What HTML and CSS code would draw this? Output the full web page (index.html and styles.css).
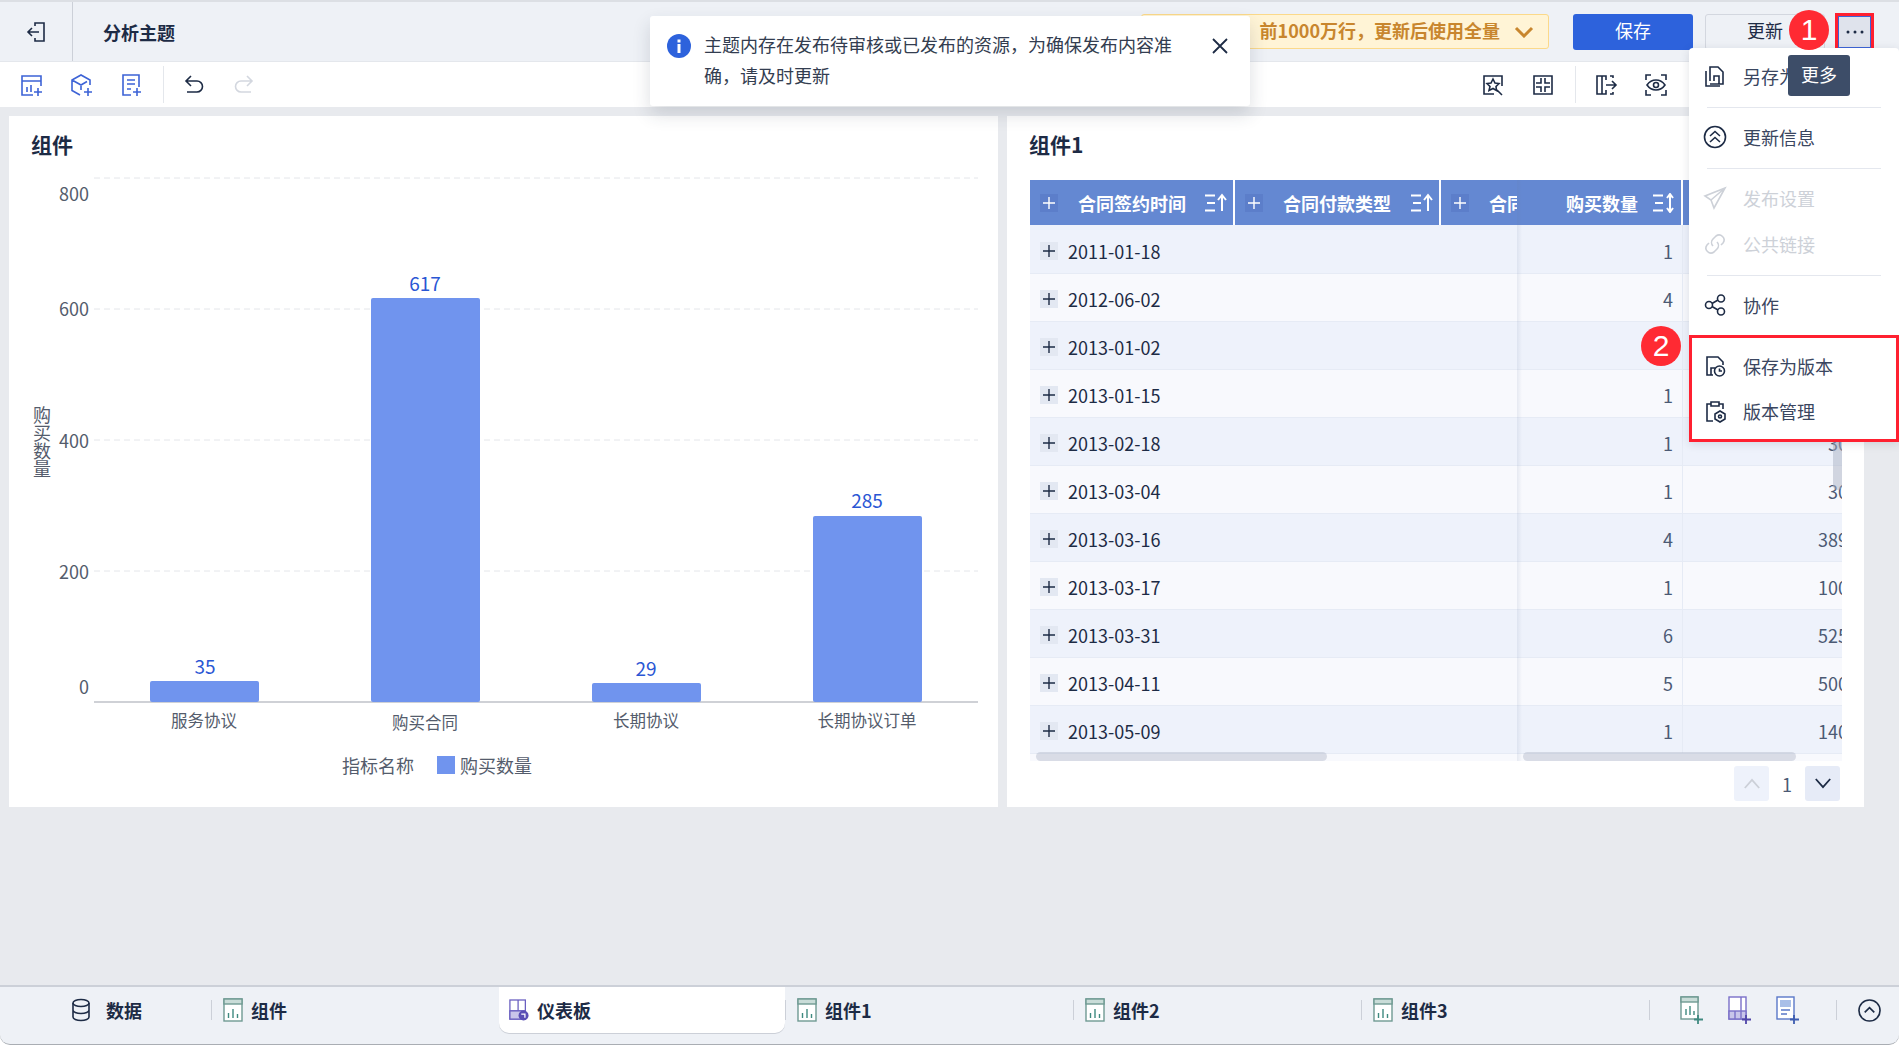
FILE: index.html

```html
<!DOCTYPE html>
<html lang="zh-CN">
<head>
    <meta charset="UTF-8">
    <title>分析主题</title>
    <link rel="stylesheet" href="styles.css">
</head>
<body>
<svg class="sprite" width="0" height="0">
    <symbol id="i-plus" viewBox="0 0 18 18"><path d="M9 3v12M3 9h12"/></symbol>
    <symbol id="i-sort-up" viewBox="0 0 22 20"><path d="M0 2.500h10M2 10h8M0 17.500h10M17 18V3M13 7l4-5 4 5"/></symbol>
    <symbol id="i-sort-both" viewBox="0 0 22 20"><path d="M0 2.500h10M2 10h8M0 17.500h10M17 1v18M14 5l3-4 3 4M14 15l3 4 3-4"/></symbol>
    <symbol id="i-tab-chart" viewBox="0 0 20 24"><rect x="1" y="1" width="18" height="22" fill="#fff" stroke="#6f9a93"/><rect x="1" y="1" width="18" height="5" fill="#c9dcd8" stroke="#6f9a93"/><path d="M5.500 20v-5M10 20v-9M14.500 20v-4" stroke="#3f8a80"/></symbol>
</svg>

<div class="app">
    <!-- top bar -->
    <header class="topbar">
        <div class="back">
            <svg class="ico" viewBox="0 0 24 24"><path d="M11 6V3h9v18h-9v-3M15 12H4M8 8l-4 4 4 4"/></svg>
        </div>
        <div class="title">分析主题</div>
        <div class="top-actions">
            <span class="top-divider"></span>
            <div class="banner">
                <span>前1000万行，更新后使用全量</span>
                <svg class="banner-arrow" viewBox="0 0 20 12"><path d="M2 2l8 8 8-8"/></svg>
            </div>
            <button class="btn btn-save">保存</button>
            <button class="btn btn-update">更新</button>
            <button class="btn-more"><svg class="more-dots" viewBox="0 0 18 4"><circle cx="2" cy="2" r="1.500"/><circle cx="9" cy="2" r="1.500"/><circle cx="16" cy="2" r="1.500"/></svg></button>
        </div>
    </header>

    <!-- toolbar -->
    <div class="toolbar">
        <svg class="ico ico-blue" viewBox="0 0 24 24"><path d="M22 13V3H3v19h11M3 8h19M8 19v-5M12 19v-7M19 15v8M15 19h8"/></svg>
        <svg class="ico ico-blue" viewBox="0 0 24 24"><path d="M11 22l-8-4.500V7l9-5 9 5v5M3 7l9 5 6-3.500M12 12v5M19 15v8M15 19h8"/></svg>
        <svg class="ico ico-blue" viewBox="0 0 24 24"><path d="M12 22H4V2h16v12M8 7h8M8 11h8M8 16h4M18 15v8M14 19h8"/></svg>
        <span class="tool-divider"></span>
        <svg class="ico ico-undo" viewBox="0 0 24 24"><path d="M9 3L4 8l5 5M4 8h11a5.500 5.500 0 0 1 0 11H5"/></svg>
        <svg class="ico ico-off" viewBox="0 0 24 24"><path d="M15 3l5 5-5 5M20 8H9a5.500 5.500 0 0 0 0 11h10"/></svg>
        <div class="tools-right">
            <svg class="ico" viewBox="0 0 24 24"><path d="M21 13V3H3v18h10M12 6l2 4 4 .5-3 3 .5 4-3.500-2-4 2 1-4-3-3 4-.5zM16 17l5 5"/></svg>
            <svg class="ico" viewBox="0 0 24 24"><path d="M3 3h18v18H3zM10 5v5H5M14 5v5h5M10 19v-5H5M14 19v-5h5"/></svg>
            <span class="tool-divider"></span>
            <svg class="ico" viewBox="0 0 24 24"><path d="M12 7V3H3v18h9v-4M8 3v18M12 12h10M18 8l4 4-4 4M16 3h3v2M16 21h3v-2"/></svg>
            <svg class="ico" viewBox="0 0 24 24"><path d="M2 7V2h5M17 2h5v5M22 17v5h-5M7 22H2v-5M3 12s3.500-5 9-5 9 5 9 5-3.500 5-9 5-9-5-9-5z"/><circle cx="12" cy="12" r="2.500"/></svg>
        </div>
    </div>

    <!-- canvas -->
    <main class="canvas">
        <section class="card">
            <h2 class="card-title">组件</h2>
            <svg class="chart" width="989" height="570" viewBox="0 0 989 570">
                <g class="grid">
                    <line x1="85" y1="4" x2="969" y2="4"/>
                    <line x1="85" y1="135" x2="969" y2="135"/>
                    <line x1="85" y1="266" x2="969" y2="266"/>
                    <line x1="85" y1="397" x2="969" y2="397"/>
                </g>
                <line class="axis" x1="85" y1="528" x2="969" y2="528"/>
                <g class="bars">
                    <rect x="141" y="507" width="109" height="21" rx="2"/>
                    <rect x="362" y="124" width="109" height="404" rx="2"/>
                    <rect x="583" y="509" width="109" height="19" rx="2"/>
                    <rect x="804" y="342" width="109" height="186" rx="2"/>
                </g>
                <g class="y-labels">
                    <text x="80" y="19">800</text>
                    <text x="80" y="134">600</text>
                    <text x="80" y="266">400</text>
                    <text x="80" y="397">200</text>
                    <text x="80" y="512">0</text>
                </g>
                <text class="y-title" x="33" y="268">购买数量</text>
                <g class="values">
                    <text x="196" y="491">35</text>
                    <text x="416" y="108">617</text>
                    <text x="637" y="493">29</text>
                    <text x="858" y="325">285</text>
                </g>
                <g class="x-labels">
                    <text x="195" y="546">服务协议</text>
                    <text x="416" y="548">购买合同</text>
                    <text x="637" y="546">长期协议</text>
                    <text x="858" y="546">长期协议订单</text>
                </g>
            </svg>
            <div class="legend">
                <span>指标名称</span>
                <i class="legend-mark"></i>
                <span>购买数量</span>
            </div>
        </section>

        <section class="card">
            <h2 class="card-title card-title-table">组件1</h2>
            <div class="table-wrap">
                <table class="data-table">
                    <colgroup><col class="c1"><col class="c2"><col class="c3"><col class="c4"><col class="c5"></colgroup>
                    <thead>
                        <tr>
                            <th><div class="th-in"><svg class="plus"><use href="#i-plus"/></svg><span class="th-text">合同签约时间</span><svg class="sort"><use href="#i-sort-up"/></svg></div></th>
                            <th><div class="th-in"><svg class="plus"><use href="#i-plus"/></svg><span class="th-text">合同付款类型</span><svg class="sort"><use href="#i-sort-up"/></svg></div></th>
                            <th class="th-frozen-end"><div class="th-in"><svg class="plus"><use href="#i-plus"/></svg><span class="th-text">合同类型</span></div></th>
                            <th><div class="th-in th-right"><span class="th-text">购买数量</span><svg class="sort"><use href="#i-sort-both"/></svg></div></th>
                            <th></th>
                        </tr>
                    </thead>
                    <tbody>
                        <tr><td colspan="3"><div class="td-in"><svg class="plus"><use href="#i-plus"/></svg>2011-01-18</div></td><td class="num">1</td><td class="num">1000</td></tr>
                        <tr><td colspan="3"><div class="td-in"><svg class="plus"><use href="#i-plus"/></svg>2012-06-02</div></td><td class="num">4</td><td class="num">4000</td></tr>
                        <tr><td colspan="3"><div class="td-in"><svg class="plus"><use href="#i-plus"/></svg>2013-01-02</div></td><td class="num">2</td><td class="num">2000</td></tr>
                        <tr><td colspan="3"><div class="td-in"><svg class="plus"><use href="#i-plus"/></svg>2013-01-15</div></td><td class="num">1</td><td class="num">1000</td></tr>
                        <tr><td colspan="3"><div class="td-in"><svg class="plus"><use href="#i-plus"/></svg>2013-02-18</div></td><td class="num">1</td><td class="num">300</td></tr>
                        <tr><td colspan="3"><div class="td-in"><svg class="plus"><use href="#i-plus"/></svg>2013-03-04</div></td><td class="num">1</td><td class="num">300</td></tr>
                        <tr><td colspan="3"><div class="td-in"><svg class="plus"><use href="#i-plus"/></svg>2013-03-16</div></td><td class="num">4</td><td class="num">3899</td></tr>
                        <tr><td colspan="3"><div class="td-in"><svg class="plus"><use href="#i-plus"/></svg>2013-03-17</div></td><td class="num">1</td><td class="num">1000</td></tr>
                        <tr><td colspan="3"><div class="td-in"><svg class="plus"><use href="#i-plus"/></svg>2013-03-31</div></td><td class="num">6</td><td class="num">5250</td></tr>
                        <tr><td colspan="3"><div class="td-in"><svg class="plus"><use href="#i-plus"/></svg>2013-04-11</div></td><td class="num">5</td><td class="num">5000</td></tr>
                        <tr><td colspan="3"><div class="td-in"><svg class="plus"><use href="#i-plus"/></svg>2013-05-09</div></td><td class="num">1</td><td class="num">1400</td></tr>
                        <tr><td colspan="3"></td><td></td><td></td></tr>
                    </tbody>
                </table>
                <span class="freeze-line"></span>
                <span class="scroll scroll-a"></span>
                <span class="scroll scroll-b"></span>
                <span class="scroll-v"></span>
            </div>
            <div class="pager">
                <button class="page-btn page-up"><svg viewBox="0 0 20 12"><path d="M2 11l8-9 8 9"/></svg></button>
                <span class="page-num">1</span>
                <button class="page-btn page-down"><svg viewBox="0 0 20 12"><path d="M2 1l8 9 8-9"/></svg></button>
            </div>
        </section>
    </main>

    <!-- bottom tabs -->
    <footer class="tabbar">
        <div class="tab-data">
            <svg class="ico" viewBox="0 0 24 24"><ellipse cx="12" cy="5" rx="8" ry="3.500"/><path d="M4 5v14c0 2 3.500 3.500 8 3.500s8-1.500 8-3.500V5M4 12c0 2 3.500 3.500 8 3.500s8-1.500 8-3.500"/></svg>
            <span>数据</span>
        </div>
        <div class="tab"><svg class="tab-ico"><use href="#i-tab-chart"/></svg><span>组件</span></div>
        <div class="tab tab-active">
            <svg class="tab-ico" viewBox="0 0 22 24"><rect x="1" y="1" width="17" height="21" fill="#fff" stroke="#6a5fc0"/><path d="M1 13h17M10 1v21" stroke="#6a5fc0"/><rect x="1" y="13" width="17" height="9" fill="#c9c5ea" stroke="#6a5fc0"/><circle cx="16" cy="18" r="5.500" fill="#5a4fb5" stroke="none"/><path d="M13.500 16.500h4v4" stroke="#fff"/></svg>
            <span>仪表板</span>
        </div>
        <div class="tab"><svg class="tab-ico"><use href="#i-tab-chart"/></svg><span>组件1</span></div>
        <div class="tab"><svg class="tab-ico"><use href="#i-tab-chart"/></svg><span>组件2</span></div>
        <div class="tab"><svg class="tab-ico"><use href="#i-tab-chart"/></svg><span>组件3</span></div>
        <div class="tab-tools">
            <svg class="add-ico" viewBox="0 0 24 28"><rect x="2" y="1" width="17" height="22" fill="#fff" stroke="#6f9a93"/><rect x="2" y="1" width="17" height="5" fill="#c9dcd8" stroke="#6f9a93"/><path d="M7 19v-6M11 19v-9M15 19v-4" stroke="#3f8a80"/><path d="M19 19v9M15 23.500h9" stroke="#3f8a80" stroke-width="1.800"/></svg>
            <svg class="add-ico" viewBox="0 0 24 28"><rect x="2" y="1" width="17" height="22" fill="#fff" stroke="#7a6fc8"/><rect x="2" y="15" width="17" height="8" fill="#c9c5ea" stroke="#7a6fc8"/><path d="M14 1v22M8 15v8" stroke="#7a6fc8"/><path d="M19 19v9M15 23.500h9" stroke="#4f45a8" stroke-width="1.800"/></svg>
            <svg class="add-ico" viewBox="0 0 24 28"><rect x="2" y="1" width="17" height="22" fill="#fff" stroke="#5a78c8"/><rect x="5" y="4" width="11" height="7" fill="#a9bfe8" stroke="none"/><path d="M6 14h9M6 18h6" stroke="#5a78c8"/><path d="M19 19v9M15 23.500h9" stroke="#3c5cb0" stroke-width="1.800"/></svg>
            <span class="tab-tools-divider"></span>
            <svg class="collapse-ico" viewBox="0 0 24 24"><circle cx="12" cy="12" r="11"/><path d="M7 14l5-5 5 5"/></svg>
        </div>
    </footer>
</div>

<!-- overlays -->
<div class="notice">
    <svg class="notice-ico" viewBox="0 0 24 24"><circle cx="12" cy="12" r="12" fill="#2d62dc"/><rect x="10.500" y="10" width="3" height="9" fill="#fff"/><rect x="10.500" y="5.500" width="3" height="3" fill="#fff"/></svg>
    <p class="notice-text">主题内存在发布待审核或已发布的资源，为确保发布内容准确，请及时更新</p>
    <svg class="notice-close" viewBox="0 0 18 18"><path d="M2 2l14 14M16 2L2 16"/></svg>
</div>

<div class="menu">
    <div class="menu-item"><svg class="ico" viewBox="0 0 24 24"><path d="M7 17V3h8l5 5v12H7M11 17v-5h5v8M3 7v15h14"/></svg>另存为</div>
    <hr>
    <div class="menu-item"><svg class="ico" viewBox="0 0 24 24"><circle cx="12" cy="12" r="10.500"/><path d="M7 11l5-4.500 5 4.500M7 17l5-4.500 5 4.500"/></svg>更新信息</div>
    <hr>
    <div class="menu-item item-off"><svg class="ico" viewBox="0 0 24 24"><path d="M22 2L2 10l6 4 3 8zM22 2L8 14"/></svg>发布设置</div>
    <div class="menu-item item-off"><svg class="ico" viewBox="0 0 24 24"><path d="M10 14a5 5 0 0 1 0-7l3-3a5 5 0 0 1 7 7l-2 2M14 10a5 5 0 0 1 0 7l-3 3a5 5 0 0 1-7-7l2-2"/></svg>公共链接</div>
    <hr>
    <div class="menu-item"><svg class="ico" viewBox="0 0 24 24"><circle cx="6" cy="12" r="3.500"/><circle cx="18" cy="5.500" r="3.500"/><circle cx="18" cy="18.500" r="3.500"/><path d="M9 10.500l6-3.500M9 13.500l6 3.500"/></svg>协作</div>
    <hr>
    <div class="menu-item"><svg class="ico" viewBox="0 0 24 24"><path d="M10 21H4V3h11l5 5v3M8 21v-7h4"/><circle cx="16.500" cy="17" r="5"/><path d="M16.500 14.500V17h2.500"/></svg>保存为版本</div>
    <div class="menu-item menu-item-last"><svg class="ico" viewBox="0 0 24 24"><path d="M8 5H4v17h6M16 5h4v5M8 3h8v4H8z"/><path d="M17 12l5 3v5l-5 3-5-3v-5z"/><circle cx="17" cy="17.500" r="1.500"/></svg>版本管理</div>
</div>

<div class="tooltip">更多</div>
<div class="red-box"></div>
<div class="badge badge-1">1</div>
<div class="badge badge-2">2</div>
</body>
</html>
```

FILE: styles.css

```css
* {
    box-sizing: border-box;
    margin: 0;
    padding: 0;
}

body {
    width: 1899px;
    height: 1045px;
    overflow: hidden;
    position: relative;
    background-color: #fff;
    color: #1d2b45;
    font-family: "Noto Sans CJK SC", "Noto Sans", sans-serif;
    font-size: 18px;
}

button {
    font-family: inherit;
    font-size: 18px;
    cursor: pointer;
}

.sprite {
    position: absolute;
}

symbol path,
.plus,
.sort {
    fill: none;
}

.ico {
    width: 24px;
    height: 24px;
    flex: none;
    fill: none;
    stroke: #1d2b45;
    stroke-width: 1.6;
}

.ico-blue {
    stroke: #3d63d6;
}

.ico-off {
    stroke: #d3d7df;
}

.app {
    display: flex;
    flex-direction: column;
    height: 100%;
}

/* top bar */
.topbar {
    display: flex;
    align-items: center;
    height: 62px;
    flex: none;
    padding-right: 25px;
    background-color: #eef1f6;
    border-top: 2px solid #dcdfe4;
    border-bottom: 1px solid #e4e7ec;
}

.back {
    display: flex;
    align-items: center;
    justify-content: center;
    width: 73px;
    height: 100%;
    border-right: 1px solid #ccd0d8;
}

.title {
    margin-left: 30px;
    font-weight: 700;
}

.top-actions {
    display: flex;
    align-items: center;
    margin-left: auto;
}

.top-divider {
    width: 1px;
    height: 30px;
    margin-right: 24px;
    background-color: #ccd0d8;
}

.banner {
    display: flex;
    align-items: center;
    justify-content: flex-end;
    width: 408px;
    height: 35px;
    padding: 0 14px 3px 0;
    margin-right: 24px;
    color: #c8862e;
    font-weight: 700;
    background-color: #fff4d6;
    border: 1px solid #fbd98a;
    border-radius: 3px;
}

.banner-arrow {
    width: 20px;
    height: 12px;
    margin: 3px 0 0 14px;
    fill: none;
    stroke: #c8862e;
    stroke-width: 3;
}

.btn {
    width: 120px;
    height: 36px;
    padding-bottom: 3px;
    border-radius: 3px;
}

.btn-save {
    margin-right: 12px;
    color: #fff;
    background-color: #2d62dc;
    border: none;
}

.btn-update {
    margin-right: 10px;
    color: #1d2b45;
    background-color: #eef1f6;
    border: 1px solid #d3d7df;
}

.btn-more {
    display: flex;
    align-items: center;
    justify-content: center;
    width: 39px;
    height: 38px;
    background-color: #dfe3ec;
    border: 3px solid #ff2030;
    outline: 1px solid #3d63d6;
    outline-offset: -4px;
}

.more-dots {
    width: 18px;
    height: 4px;
    fill: #1d2b45;
}

/* toolbar */
.toolbar {
    display: flex;
    align-items: center;
    gap: 26px;
    height: 45px;
    flex: none;
    padding: 0 231px 0 19px;
    background-color: #fff;
}

.tool-divider {
    width: 1px;
    height: 37px;
    margin: 0 -8px 0 -6px;
    background-color: #e4e7ec;
}

.tools-right {
    display: flex;
    align-items: center;
    gap: 26px;
    margin-left: auto;
}

/* canvas */
.canvas {
    flex: 1;
    display: grid;
    grid-template-columns: 989px 857px;
    grid-template-rows: 691px;
    gap: 9px;
    padding: 9px 0 0 9px;
    background-color: #e8eaee;
}

.card {
    background-color: #fff;
}

.card-title {
    height: 58px;
    padding-left: 22px;
    font-size: 21px;
    font-weight: 700;
    line-height: 56px;
}

.card-title-table {
    margin-bottom: 6px;
}

/* chart */
.chart {
    display: block;
}

.chart text {
    dominant-baseline: central;
    font-size: 16.500px;
    fill: #545c6c;
}

.grid line {
    stroke: #e4e6ea;
    stroke-dasharray: 6 4;
}

.axis {
    stroke: #cfd1d6;
    stroke-width: 2;
}

.bars rect {
    fill: #7094ee;
}

.chart .y-labels text {
    text-anchor: end;
    font-size: 18px;
}

.x-labels text {
    text-anchor: middle;
}

.chart .values text {
    text-anchor: middle;
    font-size: 19px;
    fill: #2a56d4;
}

.chart .y-title {
    writing-mode: vertical-rl;
    text-anchor: middle;
    dominant-baseline: auto;
    font-size: 18px;
}

.legend {
    display: flex;
    align-items: center;
    height: 42px;
    padding-left: 333px;
    font-size: 18px;
    color: #545c6c;
}

.legend-mark {
    width: 18px;
    height: 18px;
    margin: 0 5px 0 23px;
    background-color: #7094ee;
}

/* table */
.table-wrap {
    position: relative;
    width: 812px;
    height: 581px;
    margin-left: 23px;
    overflow: hidden;
}

.data-table {
    table-layout: fixed;
    border-collapse: separate;
    border-spacing: 0;
    width: 838px;
}

.c1 { width: 205px; }
.c2 { width: 206px; }
.c3 { width: 76px; }
.c4 { width: 166px; }
.c5 { width: 185px; }

.data-table th {
    height: 45px;
    padding: 0;
    color: #fff;
    font-weight: 700;
    text-align: left;
    white-space: nowrap;
    overflow: hidden;
    background-color: #6488d2;
    border-right: 2px solid #fff;
}

.data-table .th-frozen-end {
    border-right: none;
}

.th-in {
    display: flex;
    align-items: center;
    height: 45px;
    padding: 0 6px 0 10px;
}

.th-right {
    justify-content: flex-end;
}

.th-text {
    margin-left: 20px;
    flex: none;
}

.data-table .plus {
    width: 18px;
    height: 18px;
    flex: none;
    stroke: currentColor;
    stroke-width: 1.4;
    background-color: rgba(60, 90, 170, 0.2);
}

.sort {
    width: 22px;
    height: 20px;
    flex: none;
    margin-left: auto;
    stroke: #fff;
    stroke-width: 2;
}

.th-right .sort {
    margin-left: 15px;
}

.data-table td {
    height: 48px;
    padding: 3px 0 0;
    background-color: #eef2fb;
    border-bottom: 1px solid #e6ebf5;
    white-space: nowrap;
}

.data-table tbody tr:first-child td {
    height: 49px;
}

.data-table tr:nth-child(even) td {
    background-color: #f8f9fd;
}

.data-table td.num {
    border-right: 1px solid #e6ebf5;
}

.td-in {
    display: flex;
    align-items: center;
    gap: 10px;
    padding-left: 10px;
}

.data-table td .plus {
    color: #1d2b45;
    background-color: #e3e8f2;
}

.data-table .num {
    padding-right: 9px;
    color: #4c5a74;
    text-align: right;
}

.freeze-line {
    position: absolute;
    left: 487px;
    top: 0;
    bottom: 0;
    width: 5px;
    background: linear-gradient(90deg, rgba(100, 120, 160, 0.12), rgba(100, 120, 160, 0));
}

.scroll {
    position: absolute;
    bottom: 0;
    height: 9px;
    border-radius: 5px;
    background-color: rgba(170, 178, 195, 0.4);
}

.scroll-a {
    left: 6px;
    width: 291px;
}

.scroll-b {
    left: 493px;
    width: 273px;
}

.scroll-v {
    position: absolute;
    right: 0;
    top: 190px;
    width: 9px;
    height: 120px;
    border-radius: 5px;
    background-color: rgba(170, 178, 195, 0.5);
}

.pager {
    display: flex;
    align-items: center;
    justify-content: flex-end;
    margin-top: 5px;
    padding-right: 24px;
}

.page-btn {
    display: flex;
    align-items: center;
    justify-content: center;
    width: 35px;
    height: 35px;
    border: none;
    border-radius: 3px;
}

.page-btn svg {
    width: 18px;
    height: 11px;
    fill: none;
    stroke-width: 2;
}

.page-up {
    background-color: #eef2fb;
}

.page-up svg {
    stroke: #ccd0d8;
}

.page-down {
    background-color: #e6ebf7;
}

.page-down svg {
    stroke: #1d2b45;
}

.page-num {
    width: 36px;
    color: #4c5a74;
    text-align: center;
}

/* bottom tabs */
.tabbar {
    display: flex;
    align-items: flex-start;
    height: 60px;
    flex: none;
    background-color: #eef1f6;
    border-top: 2px solid #ccd0d8;
    border-bottom: 1px solid #a9adb3;
    border-radius: 0 0 10px 10px;
    font-weight: 700;
}

.tab-data {
    display: flex;
    align-items: center;
    gap: 13px;
    width: 211px;
    height: 46px;
    padding-left: 69px;
}

.tab {
    position: relative;
    display: flex;
    align-items: center;
    gap: 8px;
    width: 288px;
    height: 46px;
    padding-left: 12px;
}

.tab::before {
    content: '';
    position: absolute;
    left: 0;
    top: 13px;
    width: 1px;
    height: 20px;
    background-color: #ccd0d8;
}

.tab-ico {
    width: 20px;
    height: 24px;
    flex: none;
    fill: none;
    stroke-width: 1.4;
}

.tab-active {
    width: 286px;
    padding-left: 10px;
    background-color: #fff;
    border-radius: 0 0 10px 10px;
    box-shadow: 0 1px 0 #ccd0d8;
}

.tab-active::before {
    display: none;
}

.tab-tools {
    display: flex;
    align-items: center;
    height: 46px;
    padding-left: 30px;
    position: relative;
}

.tab-tools::before {
    content: '';
    position: absolute;
    left: 0;
    top: 13px;
    width: 1px;
    height: 20px;
    background-color: #ccd0d8;
}

.add-ico {
    width: 24px;
    height: 28px;
    margin-right: 24px;
    fill: none;
    stroke-width: 1.4;
}

.tab-tools-divider {
    width: 1px;
    height: 20px;
    margin: 0 21px 0 13px;
    background-color: #ccd0d8;
}

.collapse-ico {
    width: 23px;
    height: 23px;
    fill: none;
    stroke: #1d2b45;
    stroke-width: 1.7;
}

/* overlays */
.notice {
    position: absolute;
    left: 650px;
    top: 16px;
    display: flex;
    align-items: flex-start;
    width: 600px;
    height: 90px;
    padding: 13px 0 0 17px;
    background-color: #fff;
    border-radius: 3px;
    box-shadow: 0 8px 18px rgba(40, 50, 70, 0.16);
}

.notice-ico {
    width: 24px;
    height: 24px;
    flex: none;
    margin-top: 5px;
}

.notice-text {
    width: 480px;
    margin-left: 13px;
    line-height: 31px;
    color: #333d50;
}

.notice-close {
    width: 18px;
    height: 18px;
    flex: none;
    margin: 8px 0 0 27px;
    fill: none;
    stroke: #1d2b45;
    stroke-width: 1.8;
}

.menu {
    position: absolute;
    left: 1689px;
    top: 48px;
    width: 210px;
    height: 394px;
    padding-top: 6px;
    background-color: #fff;
    border-radius: 4px 4px 0 0;
    box-shadow: 0 2px 10px rgba(40, 50, 70, 0.14);
}

.menu-item {
    display: flex;
    align-items: center;
    gap: 16px;
    height: 46px;
    padding: 0 0 2px 14px;
    color: #3a4660;
}

.menu-item-last {
    margin-top: -1px;
}

.item-off {
    color: #cdd1d8;
}

.item-off .ico {
    stroke: #cdd1d8;
}

.menu hr {
    height: 1px;
    margin: 7px 18px 7px 18px;
    border: none;
    background-color: #e4e7ee;
}

.tooltip {
    position: absolute;
    left: 1788px;
    top: 55px;
    width: 62px;
    height: 41px;
    color: #fff;
    line-height: 38px;
    text-align: center;
    background-color: #3d4d68;
    border-radius: 3px;
}

.red-box {
    position: absolute;
    left: 1689px;
    top: 335px;
    width: 210px;
    height: 107px;
    border: 3px solid #ff2030;
}

.badge {
    position: absolute;
    width: 40px;
    height: 40px;
    color: #fff;
    font-family: "Liberation Sans", sans-serif;
    font-size: 30px;
    line-height: 40px;
    text-align: center;
    background-color: #ff2a33;
    border-radius: 50%;
}

.badge-1 {
    left: 1789px;
    top: 10px;
}

.badge-2 {
    left: 1641px;
    top: 326px;
}
```
